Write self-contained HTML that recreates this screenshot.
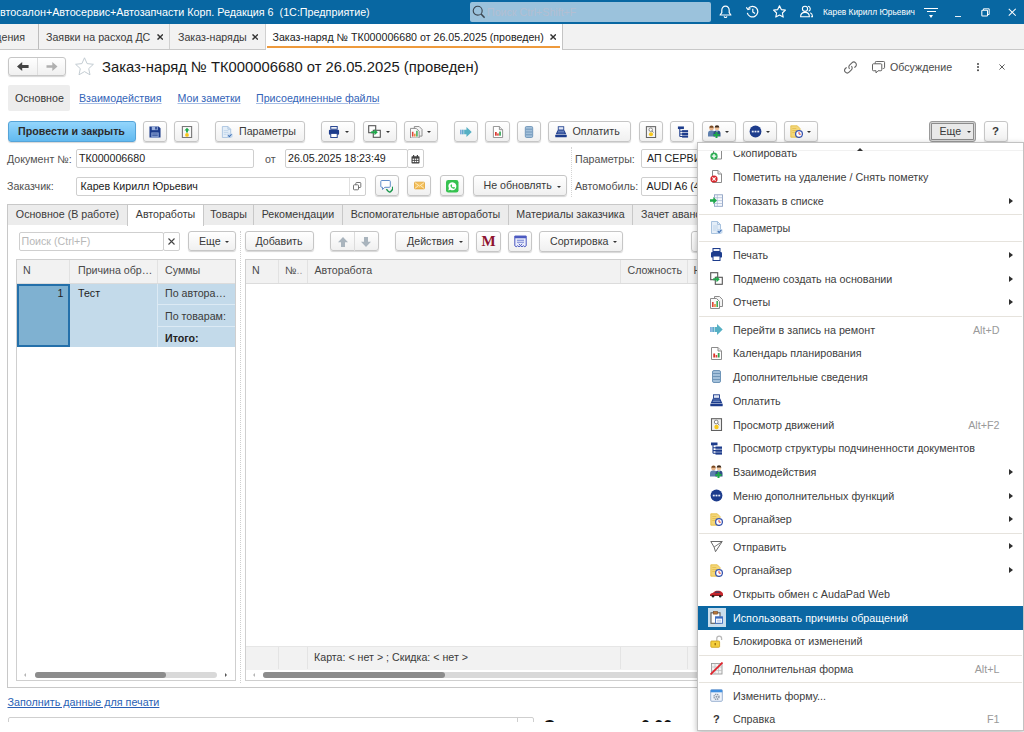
<!DOCTYPE html>
<html lang="ru"><head><meta charset="utf-8"><title>Заказ-наряд</title>
<style>
*{box-sizing:border-box;margin:0;padding:0}
html,body{width:1024px;height:732px;overflow:hidden;background:#fff}
body{font-family:"Liberation Sans",Arial,sans-serif;font-size:10.67px;color:#3a3a3a;position:relative}
.a{position:absolute;white-space:nowrap}
.t{position:absolute;white-space:nowrap;line-height:12px}
#titlebar{left:0;top:0;width:1024px;height:24px;background:#0867a2}
#titlebar .t{color:#fff}
#tabbar{left:0;top:24px;width:1024px;height:26px;background:#f2f2f2;border-bottom:1px solid #c8c8c8}
.tsep{position:absolute;top:0;width:1px;height:25px;background:#d0d0d0}
.btn{position:absolute;height:21px;border:1px solid #c6c6c6;border-radius:3px;background:linear-gradient(#fff,#f0f0f0);box-shadow:0 1px 1px rgba(0,0,0,.16);white-space:nowrap;line-height:19px;text-align:center;color:#3a3a3a}
.inp{position:absolute;height:19px;border:1px solid #cfcfcf;border-radius:2px;background:#fff;line-height:17px;padding-left:3px;color:#222;white-space:nowrap;overflow:hidden}
.lnk{color:#2a5fb5;text-decoration:underline}
.nl{color:#3364b8;text-decoration-color:#a4bce4}
.tab{position:absolute;top:204px;height:21px;border:1px solid #c8c8c8;border-left:none;border-bottom:none;background:#ececec;line-height:19.600px;text-align:center;color:#3a3a3a}
.th{position:absolute;top:0;height:23px;line-height:21.5px;padding-left:8px;border-right:1px solid #e2e2e2;color:#4a4a4a}
.mi{position:absolute;left:0;width:325px;height:24px;line-height:24px;color:#404040;font-size:10.75px}
.mi .tx{position:absolute;left:35px;top:0;line-height:12px}
.mi .sc{position:absolute;right:23.500px;top:0;color:#9a9a9a;line-height:12px}
.mi .ar{position:absolute;right:10.500px;top:8.400px;width:0;height:0;border-left:4.300px solid #2e2e2e;border-top:3.500px solid transparent;border-bottom:3.500px solid transparent}

.msep{position:absolute;left:1px;width:323px;height:1px;background:#e6e3dd}
.x{position:absolute;font-size:13px;line-height:12px;color:#333}
</style></head><body>

<div class="a" id="titlebar">
<div class="t" style="left:0;top:6px;font-size:10.760px">втосалон+Автосервис+Автозапчасти Корп. Редакция 6&nbsp; (1С:Предприятие)</div>
<div class="a" style="left:470px;top:1.500px;width:241px;height:20.500px;border-radius:2px;background:#9bc2dc"></div>
<svg class="a" style="left:471.5px;top:5px" width="13.5" height="13.5" viewBox="0 0 13 13" ><circle cx="5.500" cy="5.500" r="4.300" fill="none" stroke="#3c4650" stroke-width="1.100"/><path d="M8.700 8.700l3.500 3.500" stroke="#3c4650" stroke-width="1.500"/></svg>
<div class="t" style="left:487px;top:6px;color:#b3bfd2">Поиск Ctrl+Shift+F</div>
<svg class="a" style="left:719px;top:5px" width="13" height="13" viewBox="0 0 13 13" ><path d="M6.500 1.200c-2.300 0-3.700 1.700-3.700 4v2.500l-1.700 2.300h10.800l-1.700-2.300v-2.500c0-2.300-1.400-4-3.700-4z" stroke="#fff" fill="none" stroke-width="1.200" stroke-linejoin="round"/><path d="M5.200 11.300a1.300 1.300 0 0 0 2.600 0" stroke="#fff" fill="none" stroke-width="1.100"/></svg>
<svg class="a" style="left:746px;top:5px" width="13" height="13" viewBox="0 0 13 13" ><path d="M2.200 3.500a5.300 5.300 0 1 1-.9 4.300" stroke="#fff" fill="none" stroke-width="1.200"/><path d="M0.300 2.300l1.700 2.200 2.500-.9" stroke="#fff" fill="none" stroke-width="1.200"/><path d="M6.800 3.700v3.300l2.200 1.600" stroke="#fff" fill="none" stroke-width="1.200"/></svg>
<svg class="a" style="left:773px;top:5px" width="13" height="13" viewBox="0 0 13 13" ><path d="M6.500 0.800l1.800 3.800 4.100.5-3 2.900.8 4.100-3.700-2-3.700 2 .8-4.100-3-2.900 4.100-.5z" stroke="#fff" fill="none" stroke-width="1.150" stroke-linejoin="round"/></svg>
<svg class="a" style="left:800px;top:5px" width="13" height="13" viewBox="0 0 13 13" ><circle cx="5" cy="3.800" r="2.600" stroke="#fff" fill="none" stroke-width="1.100"/><path d="M0.600 11.800c0-2.800 1.800-4.400 4.400-4.400s4.400 1.600 4.400 4.400z" stroke="#fff" fill="none" stroke-width="1.100" stroke-linejoin="round"/><path d="M8 1.300a2.600 2.600 0 0 1 .6 5M10.300 7.800c1.400.7 2.200 2 2.200 4h-1.600" stroke="#fff" fill="none" stroke-width="1.100"/></svg>
<div class="t" style="left:823px;top:6px;font-size:9.6px;transform:scaleX(.87);transform-origin:0 0">Карев Кирилл Юрьевич</div>
<div class="a" style="left:924px;top:7.5px;width:14px;height:1.2px;background:#fff"></div>
<div class="a" style="left:926.5px;top:11px;width:9px;height:1.2px;background:#fff"></div>
<div class="a" style="left:928.5px;top:14.5px;width:0;height:0;border-top:3px solid #fff;border-left:2.5px solid transparent;border-right:2.5px solid transparent"></div>
<div class="a" style="left:955px;top:15.5px;width:6px;height:1.2px;background:#e8f0f8"></div>
<svg class="a" style="left:981px;top:8px" width="9" height="9" viewBox="0 0 11 11"><path d="M3 2.500v-1.500h7v7h-1.500" fill="none" stroke="#fff" stroke-width="1.200"/><rect x="1" y="2.800" width="7" height="7" rx="1" fill="none" stroke="#fff" stroke-width="1.300"/></svg>
<svg class="a" style="left:1007.5px;top:8px" width="8.5" height="8.5" viewBox="0 0 11 11"><path d="M1 1l9 9M10 1l-9 9" stroke="#fff" stroke-width="1.300"/></svg>
</div>
<div class="a" id="tabbar">
 <div class="t" style="right:999px;top:7px">щения</div>
 <div class="tsep" style="left:38px;background:#bdbdbd"></div>
 <div class="t" style="left:46px;top:7px">Заявки на расход ДС</div>
 <svg class="a" style="left:157.10000000000002px;top:9.799999999999997px" width="6.4" height="6" viewBox="0 0 6.4 6"><path d="M.5.4l5.400 5.200M5.900.4l-5.400 5.200" stroke="#333" stroke-width="1.400"/></svg>
 <div class="tsep" style="left:169px"></div>
 <div class="t" style="left:178px;top:7px">Заказ-наряды</div>
 <svg class="a" style="left:252.10000000000002px;top:9.799999999999997px" width="6.4" height="6" viewBox="0 0 6.4 6"><path d="M.5.4l5.400 5.200M5.900.4l-5.400 5.200" stroke="#333" stroke-width="1.400"/></svg>
 <div class="tsep" style="left:265px"></div>
 <div class="a" style="left:266px;top:0;width:296px;height:26px;background:#fff"></div><div class="a" style="left:267px;top:22.300px;width:293px;height:2px;background:#ee9a3c"></div>
 <div class="t" style="left:272.500px;top:7px;color:#222">Заказ-наряд № ТК000006680 от 26.05.2025 (проведен)</div>
 <svg class="a" style="left:549.9px;top:9.799999999999997px" width="6.4" height="6" viewBox="0 0 6.4 6"><path d="M.5.4l5.400 5.200M5.900.4l-5.400 5.200" stroke="#333" stroke-width="1.400"/></svg>
 <div class="tsep" style="left:562px;background:#c4c4c4"></div>
</div>
<div class="btn" style="left:7.500px;top:56.500px;width:58.500px;height:19px"></div>
<div class="a" style="left:36.700px;top:57.500px;width:1px;height:17px;background:#dedede"></div>
<svg class="a" style="left:16.500px;top:62px" width="12" height="9" viewBox="0 0 12 9"><path d="M0 4.500l5.200-4.500v3h6.400v3h-6.400v3z" fill="#444"/></svg>
<svg class="a" style="left:45.500px;top:62px" width="12" height="9" viewBox="0 0 12 9"><path d="M11.500 4.500l-5.200-4.500v3.200h-5.800v2.600h5.800v3.200z" fill="#b0b0b0"/></svg>
<svg class="a" style="left:75px;top:56.5px" width="19" height="19" viewBox="0 0 19 19" ><path d="M9.500 0.800l2.600 5.800 6.300.7-4.700 4.300 1.300 6.200-5.500-3.200-5.500 3.200 1.300-6.200-4.700-4.300 6.300-.7z" fill="#fff" stroke="#bcc6cd" stroke-width=".9" stroke-linejoin="round"/></svg>
<div class="t" style="left:102px;top:58px;font-size:14.8px;line-height:18px;color:#1a1a1a">Заказ-наряд № ТК000006680 от 26.05.2025 (проведен)</div>
<svg class="a" style="left:844px;top:60.5px" width="13" height="13" viewBox="0 0 13 13" ><path d="M5.600 7.800a2.600 2.600 0 0 1 0-3.700l2.300-2.300a2.600 2.600 0 0 1 3.700 3.700l-1.200 1.200" fill="none" stroke="#666" stroke-width="1.100"/><path d="M7.400 5.200a2.600 2.600 0 0 1 0 3.700l-2.300 2.300a2.600 2.600 0 0 1-3.700-3.700l1.200-1.200" fill="none" stroke="#666" stroke-width="1.100"/></svg>
<svg class="a" style="left:871.5px;top:61px" width="14" height="13" viewBox="0 0 15 14" ><path d="M3.500 2.800v-1.300a1 1 0 0 1 1-1h8a1 1 0 0 1 1 1v5.500a1 1 0 0 1-1 1h-1" fill="none" stroke="#555" stroke-width="1"/><path d="M0.500 4a1 1 0 0 1 1-1h8a1 1 0 0 1 1 1v5.500a1 1 0 0 1-1 1h-3l-2.200 2.300v-2.300h-2.800a1 1 0 0 1-1-1z" fill="#fff" stroke="#555" stroke-width="1"/></svg>
<div class="t" style="left:890px;top:60.600px;color:#4a4a4a">Обсуждение</div>
<div class="a" style="left:976.700px;top:62.600px;width:2px;height:2px;border-radius:1px;background:#444;box-shadow:0 3.100px 0 #444,0 6.200px 0 #444"></div>
<svg class="a" style="left:999px;top:64px" width="6" height="6" viewBox="0 0 7 7"><path d="M.5.5l6 6M6.500.5l-6 6" stroke="#555" stroke-width="1.100"/></svg>
<div class="a" style="left:7.5px;top:84.5px;width:62.5px;height:26px;background:#ededed;border-radius:2px"></div>
<div class="t" style="left:15px;top:92px;color:#333">Основное</div>
<div class="t lnk nl" style="left:79px;top:92px">Взаимодействия</div>
<div class="t lnk nl" style="left:177.500px;top:92px">Мои заметки</div>
<div class="t lnk nl" style="left:256px;top:92px">Присоединенные файлы</div>
<div class="btn" style="left:7.5px;top:120.5px;width:128px;height:21.500px;background:linear-gradient(#93d5fc,#62baf0);border-color:#56a4d8;font-weight:bold;color:#2c2c2c">Провести и закрыть</div>
<div class="btn" style="left:143px;top:120.5px;width:24px;height:21.500px;"></div>
<svg class="a" style="left:149px;top:125.7px" width="12" height="12" viewBox="0 0 13 13" ><path d="M0.5 0.5h10l2 2v10h-12z" fill="#1d3c8c"/><rect x="3" y="0.5" width="6.5" height="4" fill="#9fb4de"/><rect x="6.8" y="1" width="1.6" height="2.8" fill="#1d3c8c"/><rect x="2.5" y="7" width="8" height="5.5" fill="#8ea6d6"/><path d="M3.5 8.7h6M3.5 10.5h6" stroke="#1d3c8c" stroke-width=".8"/></svg>
<div class="btn" style="left:174px;top:120.5px;width:25px;height:21.500px;"></div>
<svg class="a" style="left:180.5px;top:125.7px" width="12" height="12" viewBox="0 0 13 13" ><rect x="1.5" y="0.5" width="10" height="12" fill="#f7f7f7" stroke="#777" stroke-width="1.2"/><path d="M6.5 2l2.800 3h-1.800v2h-2v-2h-1.800z" fill="#1ea84a"/><circle cx="6.5" cy="9.7" r="2" fill="#f6c416"/></svg>
<div class="btn" style="left:215px;top:120.5px;width:90px;height:21.500px;text-align:left;padding-left:23px">Параметры</div>
<svg class="a" style="left:221px;top:125.7px" width="12" height="12" viewBox="0 0 13 13" ><path d="M1.5 0.5h6l3 3v9h-9z" fill="#e4eef8" stroke="#a9c3df" stroke-width="1"/><path d="M7.5 0.5v3h3" fill="none" stroke="#a9c3df"/><path d="M3 5h5M3 7h5M3 9h3" stroke="#b9cfe6" stroke-width=".8"/><rect x="6.5" y="8" width="6" height="4.5" rx="1" fill="#c6d9ee"/><path d="M7.8 10.2l1.3 1.3 2.3-2.6" stroke="#3a6bb0" stroke-width="1.1" fill="none"/></svg>
<div class="btn" style="left:321px;top:120.5px;width:34px;height:21.500px;"></div>
<svg class="a" style="left:328px;top:125.7px" width="12" height="12" viewBox="0 0 13 13" ><rect x="3" y="0.5" width="7" height="3" fill="#eef1f8" stroke="#1d3c8c" stroke-width="1"/><rect x="1" y="4" width="11" height="5.600" rx="1.200" fill="#1d3c8c"/><rect x="3" y="8" width="7" height="4.5" fill="#fff" stroke="#1d3c8c" stroke-width="1"/></svg>
<div class="a" style="left:345px;top:130.7px;width:0;height:0;border-top:2.5px solid #333;border-left:2.5px solid transparent;border-right:2.5px solid transparent"></div>
<div class="btn" style="left:362.5px;top:120.5px;width:34px;height:21.500px;"></div>
<svg class="a" style="left:368px;top:125px" width="13" height="13" viewBox="0 0 13 13" ><rect x="0.700" y="0.700" width="7" height="7" fill="#fff" stroke="#555" stroke-width="1.100"/><rect x="5.300" y="5.300" width="7" height="7" fill="#fff" stroke="#555" stroke-width="1.100"/><path d="M3.2 6.2h3.3v-2l3.3 3-3.3 3v-2h-3.3z" fill="#1ea84a"/></svg>
<div class="a" style="left:386px;top:130.7px;width:0;height:0;border-top:2.5px solid #333;border-left:2.5px solid transparent;border-right:2.5px solid transparent"></div>
<div class="btn" style="left:404px;top:120.5px;width:33.5px;height:21.500px;"></div>
<svg class="a" style="left:410px;top:125.5px" width="12.5" height="12.5" viewBox="0 0 13 13" ><path d="M4.5 0.5h5l3 3v7h-8z" fill="#f3f3f3" stroke="#8c8c8c"/><path d="M0.5 2.5h6l3 3v7h-9z" fill="#fafafa" stroke="#8c8c8c"/><rect x="2" y="6" width="1.6" height="5" fill="#e0443a"/><rect x="4.2" y="8" width="1.6" height="3" fill="#ef8a3a"/><rect x="6.4" y="5" width="1.6" height="6" fill="#3cae5a"/></svg>
<div class="a" style="left:427px;top:130.7px;width:0;height:0;border-top:2.5px solid #333;border-left:2.5px solid transparent;border-right:2.5px solid transparent"></div>
<div class="btn" style="left:454px;top:120.5px;width:24px;height:21.500px;"></div>
<svg class="a" style="left:460px;top:125.7px" width="12" height="12" viewBox="0 0 13 13" ><rect x="0.3" y="4" width="1.3" height="5" fill="#4f8fd0"/><rect x="2.3" y="4" width="1.6" height="5" fill="#4f9fc8"/><path d="M4.5 4h2.5v-3l5.7 5.5-5.7 5.5v-3h-2.5z" fill="#56b0c4"/></svg>
<div class="btn" style="left:485px;top:120.5px;width:24.5px;height:21.500px;"></div>
<svg class="a" style="left:491.5px;top:125.7px" width="12" height="12" viewBox="0 0 13 13" ><path d="M1.5 0.5h6.5l3.5 3.5v8.500h-10z" fill="#fff" stroke="#8c8c8c"/><path d="M8 0.5v3.500h3.500" fill="#e8e8e8" stroke="#8c8c8c"/><rect x="3.300" y="6.500" width="1.800" height="4" fill="#d8322a"/><rect x="5.600" y="8" width="1.700" height="2.500" fill="#e0443a"/><rect x="7.800" y="6" width="1.800" height="4.500" fill="#2fa552"/></svg>
<div class="btn" style="left:517px;top:120.5px;width:24px;height:21.500px;"></div>
<svg class="a" style="left:523px;top:125.7px" width="12" height="12" viewBox="0 0 13 13" ><rect x="2.500" y="0.500" width="8" height="12" rx="1.500" fill="#a3c0da" stroke="#6f95b8"/><path d="M3 3.500h7M3 6.500h7M3 9.500h7" stroke="#6f95b8" stroke-width="1"/></svg>
<div class="btn" style="left:548px;top:120.5px;width:83px;height:21.500px;text-align:left;padding-left:23.500px">Оплатить</div>
<svg class="a" style="left:555px;top:125.7px" width="12" height="12" viewBox="0 0 13 13" ><rect x="3.500" y="0.800" width="6" height="3.500" fill="#dfe6f5" stroke="#1d3c8c" stroke-width=".9"/><path d="M2.800 4.500h7.400l2 4.500h-11.400z" fill="#1d3c8c"/><path d="M3.200 6h6.600M2.700 7.500h7.600" stroke="#8ea6d6" stroke-width=".7"/><rect x="0.300" y="9.500" width="12.400" height="2.800" rx=".6" fill="#1d3c8c"/></svg>
<div class="btn" style="left:638.5px;top:120.5px;width:24px;height:21.500px;"></div>
<svg class="a" style="left:645px;top:125.7px" width="12" height="12" viewBox="0 0 13 13" ><rect x="1.500" y="0.700" width="10" height="11.800" fill="#f3f3f3" stroke="#606060" stroke-width="1.100"/><circle cx="6.200" cy="4" r="1.900" fill="#fff" stroke="#777" stroke-width=".9"/><path d="M7.500 5.300l1.800 1.700" stroke="#777" stroke-width="1"/><circle cx="6.500" cy="9" r="2.200" fill="#f8c81c"/></svg>
<div class="btn" style="left:670px;top:120.5px;width:24px;height:21.500px;"></div>
<svg class="a" style="left:676.5px;top:125.7px" width="12" height="12" viewBox="0 0 13 13" ><rect x="1" y="0.500" width="6.500" height="2.800" fill="#1d3c8c"/><path d="M3 3v8.300M3 5.800h3M3 8.600h3M3 11.300h3" stroke="#1d3c8c" stroke-width="1.100" fill="none"/><rect x="5.500" y="4.500" width="6.500" height="2.300" fill="#1d3c8c"/><rect x="5.500" y="7.500" width="6.500" height="2.300" fill="#1d3c8c"/><rect x="5.500" y="10.300" width="6.500" height="2.300" fill="#1d3c8c"/></svg>
<div class="btn" style="left:701.5px;top:120.5px;width:34px;height:21.500px;"></div>
<svg class="a" style="left:707.5px;top:125px" width="14" height="13" viewBox="0 0 14 13" ><circle cx="3.500" cy="3.200" r="2.200" fill="#e7b48a"/><path d="M1.300 2.800a2.200 2.200 0 0 1 4.400 0z" fill="#7a4a22"/><path d="M0 11.500v-3a3 3 0 0 1 3-3h1a3 3 0 0 1 3 3v3z" fill="#5d7fae"/><circle cx="9" cy="3" r="2.300" fill="#efc29a"/><path d="M6.700 2.600a2.300 2.300 0 0 1 4.600 0z" fill="#3b2a1c"/><path d="M5.500 11.500v-3a3 3 0 0 1 3-3h1a3 3 0 0 1 3 3v3z" fill="#2f4f86"/><path d="M8.300 5.600l.7 2 .7-2z" fill="#fff"/><path d="M7.300 8.300h2v-2h2v2h2v2h-2v2h-2v-2h-2z" transform="translate(-1.800 .8)" fill="#1ea84a"/></svg>
<div class="a" style="left:725px;top:130.7px;width:0;height:0;border-top:2.5px solid #333;border-left:2.5px solid transparent;border-right:2.5px solid transparent"></div>
<div class="btn" style="left:742.5px;top:120.5px;width:34px;height:21.500px;"></div>
<svg class="a" style="left:748.5px;top:125px" width="13" height="13" viewBox="0 0 13 13" ><circle cx="6.500" cy="6.500" r="5.900" fill="#1d3c8c"/><rect x="2.800" y="5.700" width="1.900" height="1.700" fill="#e8edf8"/><rect x="5.550" y="5.700" width="1.900" height="1.700" fill="#e8edf8"/><rect x="8.300" y="5.700" width="1.900" height="1.700" fill="#e8edf8"/></svg>
<div class="a" style="left:766px;top:130.7px;width:0;height:0;border-top:2.5px solid #333;border-left:2.5px solid transparent;border-right:2.5px solid transparent"></div>
<div class="btn" style="left:784px;top:120.5px;width:34px;height:21.500px;"></div>
<svg class="a" style="left:789.5px;top:125px" width="13" height="13" viewBox="0 0 13 13" ><path d="M0.800 0.800h6.500l2.700 2.700v8.700h-9.200z" fill="#f3d67a" stroke="#e2b93c" stroke-width=".8"/><path d="M2.300 3.500h4M2.300 5.500h5M2.300 7.500h3" stroke="#e2b93c" stroke-width=".7"/><circle cx="9" cy="9" r="3.400" fill="#fff" stroke="#3a56b0" stroke-width="1.300"/><path d="M9 7v2.200h1.800" stroke="#d8322a" stroke-width=".9" fill="none"/></svg>
<div class="a" style="left:807px;top:130.7px;width:0;height:0;border-top:2.5px solid #333;border-left:2.5px solid transparent;border-right:2.5px solid transparent"></div>
<div class="btn" style="left:928.5px;top:120.5px;width:47.500px;background:#e9e9e9;border-color:#9a9a9a;box-shadow:inset 0 0 0 1px #d6d6d6,inset 0 0 0 2px #8c8c8c;text-align:left;padding-left:10px">Еще</div>
<div class="a" style="left:966.5px;top:130.7px;width:0;height:0;border-top:2.5px solid #333;border-left:2.5px solid transparent;border-right:2.5px solid transparent"></div>
<div class="btn" style="left:983.5px;top:120.5px;width:24px;height:21.500px;font-weight:bold;font-size:11.500px;color:#3a3a3a">?</div>
<div class="t" style="left:7px;top:152.500px;color:#505050">Документ №:</div>
<div class="inp" style="left:76px;top:149.200px;width:178px;padding-left:2px;line-height:17.500px">ТК000006680</div>
<div class="t" style="left:265px;top:152.500px;color:#505050">от</div>
<div class="inp" style="left:285px;top:149.200px;width:123px;padding-left:2px;line-height:17.500px">26.05.2025 18:23:49</div>
<div class="inp" style="left:407px;top:149.200px;width:17px"></div>
<svg class="a" style="left:411px;top:154.5px" width="9" height="9" viewBox="0 0 9 9" ><rect x="0.500" y="1.200" width="8" height="7.300" rx=".8" fill="#444"/><rect x="2" y="0" width="1.200" height="2.200" fill="#444"/><rect x="5.800" y="0" width="1.200" height="2.200" fill="#444"/><g fill="#fff"><rect x="1.600" y="3.600" width="1.500" height="1.300"/><rect x="3.750" y="3.600" width="1.500" height="1.300"/><rect x="5.900" y="3.600" width="1.500" height="1.300"/><rect x="1.600" y="5.800" width="1.500" height="1.300"/><rect x="3.750" y="5.800" width="1.500" height="1.300"/><rect x="5.900" y="5.800" width="1.500" height="1.300"/></g></svg>
<div class="t" style="left:575px;top:152.500px;color:#505050">Параметры:</div>
<div class="inp" style="left:641px;top:149.200px;width:100px;line-height:17.500px;padding-left:5px">АП СЕРВИС</div>
<div class="t" style="left:7px;top:180px;color:#505050">Заказчик:</div>
<div class="inp" style="left:76px;top:177px;width:290px;padding-left:3.500px">Карев Кирилл Юрьевич</div>
<div class="a" style="left:349px;top:177.500px;width:1px;height:17px;background:#e0e0e0"></div>
<svg class="a" style="left:353px;top:182px" width="9" height="9" viewBox="0 0 9 9" ><rect x="2.800" y="0.500" width="5" height="5" rx=".8" fill="#fff" stroke="#666" stroke-width=".9"/><rect x="0.500" y="2.800" width="5" height="5" rx=".8" fill="#fff" stroke="#666" stroke-width=".9"/></svg>
<div class="btn" style="left:374.500px;top:175px;width:24px"></div>
<svg class="a" style="left:380px;top:179.5px" width="13" height="13" viewBox="0 0 13 13" ><path d="M0.800 1.500a1 1 0 0 1 1-1h7.500a1 1 0 0 1 1 1v4.800a1 1 0 0 1-1 1h-4.500l-2.300 2.200v-2.200h-.7a1 1 0 0 1-1-1z" fill="#fff" stroke="#5f8cc8" stroke-width="1"/><path d="M5.800 9.500c1 1.600 2.300 2.700 3.700 3.200.6.200 1.200 0 1.600-.4l1.300-1.500c1.200-1.400 1.300-3 .3-4.300l-.9.500c.5 1 .3 1.900-.5 2.800l-1 1.100c-.5.400-1 .4-1.500.1l-1.800-2.300z" fill="#17964a"/></svg>
<div class="btn" style="left:407px;top:175px;width:24px"></div>
<svg class="a" style="left:413.5px;top:181px" width="11" height="9" viewBox="0 0 13 12" preserveAspectRatio="none"><rect x="0.500" y="1.500" width="12" height="9" rx=".8" fill="#f4c05a" stroke="#dc9a28" stroke-width=".9"/><path d="M0.800 2l5.700 4.800 5.700-4.800M0.800 10.200l4.300-4M12.200 10.200l-4.300-4" fill="none" stroke="#fff3d6" stroke-width="1"/></svg>
<div class="btn" style="left:440px;top:175px;width:24px"></div>
<svg class="a" style="left:446px;top:180px" width="12.5" height="12.5" viewBox="0 0 13 13" ><rect x="0" y="0" width="13" height="13" rx="2.400" fill="#35c24f"/><path d="M6.600 2.300a4.200 4.200 0 0 0-3.600 6.400l-.6 2.100 2.200-.6a4.200 4.200 0 1 0 2-7.900z" fill="#fff"/><path d="M5.200 4.600c.2-.3.500-.3.700 0l.4.800c.1.200 0 .4-.1.500l-.3.300c.3.700.9 1.200 1.600 1.600l.4-.4c.1-.1.300-.2.500-.1l.8.400c.3.200.3.500.1.700-.4.600-1 .8-1.700.6-1.400-.4-2.400-1.400-2.900-2.800-.2-.6 0-1.200.5-1.600z" fill="#35c24f"/></svg>
<div class="btn" style="left:472.500px;top:175px;width:94.500px;text-align:left;padding-left:10px;line-height:19.500px">Не обновлять</div>
<div class="a" style="left:557px;top:185.5px;width:0;height:0;border-top:2.5px solid #333;border-left:2.5px solid transparent;border-right:2.5px solid transparent"></div>
<div class="t" style="left:575px;top:180px;color:#505050">Автомобиль:</div>
<div class="inp" style="left:641px;top:177px;width:100px;padding-left:4.500px">AUDI A6 (4F)</div>
<div class="a" style="left:570.500px;top:147px;width:0;height:50px;border-left:1px dotted #d4d4d4"></div>
<div class="a" style="left:7px;top:224px;width:1017px;height:463.500px;border-left:1px solid #c8c8c8;border-top:1px solid #c8c8c8;border-bottom:1px solid #c8c8c8"></div>
<div class="tab" style="left:7px;width:121px;border-left:1px solid #c8c8c8">Основное (В работе)</div>
<div class="tab" style="left:127px;width:77px;background:#fff;top:203.500px;height:22.500px;line-height:18.500px;border-left:1px solid #c8c8c8">Автоработы</div>
<div class="tab" style="left:204px;width:50px">Товары</div>
<div class="tab" style="left:254px;width:89px">Рекомендации</div>
<div class="tab" style="left:343px;width:166px">Вспомогательные автоработы</div>
<div class="tab" style="left:509px;width:124px">Материалы заказчика</div>
<div class="tab" style="left:633px;width:120px;text-align:left;padding-left:8px">Зачет авансов</div>
<div class="inp" style="left:18.5px;top:231.5px;width:145px;height:19.5px;color:#b8b8b8;line-height:17.5px;padding-left:2px">Поиск (Ctrl+F)</div>
<div class="inp" style="left:162.5px;top:231.5px;width:17.5px;height:19.5px;padding:0"></div>
<svg class="a" style="left:167.5px;top:237.5px" width="7" height="7" viewBox="0 0 7 7"><path d="M.5.5l6 6M6.500.5l-6 6" stroke="#444" stroke-width="1.100"/></svg>
<div class="btn" style="left:187.5px;top:230.500px;width:48px;height:20.5px;text-align:left;padding-left:10.5px">Еще</div>
<div class="a" style="left:225px;top:240.5px;width:0;height:0;border-top:2.5px solid #333;border-left:2.5px solid transparent;border-right:2.5px solid transparent"></div>
<div class="a" style="left:16px;top:259px;width:220px;height:422px;border:1px solid #cfcfcf;background:#fff">
 <div class="a" style="left:0;top:0;width:218px;height:23.5px;background:#f2f2f2;border-bottom:1px solid #dcdcdc"></div>
 <div class="th" style="left:0;width:53px;padding-left:6px">N</div>
 <div class="th" style="left:53px;width:88px">Причина обр…</div>
 <div class="th" style="left:141px;width:77px;border-right:none;padding-left:7px">Суммы</div>
 <div class="a" style="left:0;top:23.5px;width:218px;height:63px;background:#c3daea"></div>
 <div class="a" style="left:0;top:23.5px;width:53px;height:63px;background:#7fb1d1;border:2px solid #2470aa"></div>
 <div class="t" style="left:40.5px;top:27.2px;color:#222">1</div>
 <div class="t" style="left:61px;top:27.2px;color:#222">Тест</div>
 <div class="a" style="left:140px;top:23.5px;width:1px;height:63px;background:#dceaf4"></div>
 <div class="a" style="left:141px;top:43.5px;width:77px;height:1px;background:#dceaf4"></div>
 <div class="a" style="left:141px;top:65.5px;width:77px;height:1px;background:#dceaf4"></div>
 <div class="t" style="left:148px;top:27.2px">По автора…</div>
 <div class="t" style="left:148px;top:49.5px">По товарам:</div>
 <div class="t" style="left:148px;top:71.5px;font-weight:bold;color:#222">Итого:</div>
</div>
<div class="a" style="left:34.5px;top:671.5px;width:182px;height:6.5px;border-radius:3.5px;background:#d9d9d9"></div>
<div class="a" style="left:34.5px;top:671.5px;width:131.5px;height:6.5px;border-radius:3.5px;background:#8c8c8c"></div>
<div class="a" style="left:23.5px;top:673px;width:0;height:0;border-right:2.5px solid #b5b5b5;border-top:2px solid transparent;border-bottom:2px solid transparent"></div>
<div class="a" style="left:225px;top:673px;width:0;height:0;border-left:2.5px solid #555;border-top:2px solid transparent;border-bottom:2px solid transparent"></div>
<div class="a" style="left:240px;top:231px;width:0;height:452px;border-left:1px dotted #cfcfcf"></div>
<div class="btn" style="left:244.500px;top:230.500px;width:69px;height:20.500px">Добавить</div>
<div class="btn" style="left:330px;top:230.500px;width:48.500px;height:20.500px"></div><div class="a" style="left:354px;top:232px;width:1px;height:18.500px;background:#dcdcdc"></div>
<svg class="a" style="left:337.5px;top:236.5px" width="10" height="10" viewBox="0 0 11 11" ><path d="M5.500 0l5.500 5.800h-3.300v5.200h-4.400v-5.200h-3.300z" fill="#a9b4bd"/></svg>
<svg class="a" style="left:361px;top:236.5px" width="10" height="10" viewBox="0 0 11 11" ><path d="M5.500 11l5.500-5.800h-3.300v-5.200h-4.400v5.200h-3.300z" fill="#a9b4bd"/></svg>
<div class="btn" style="left:395px;top:230.500px;width:73.500px;height:20.500px;text-align:left;padding-left:11px">Действия</div>
<div class="a" style="left:458.5px;top:240.5px;width:0;height:0;border-top:2.5px solid #333;border-left:2.5px solid transparent;border-right:2.5px solid transparent"></div>
<div class="btn" style="left:476px;top:230.500px;width:25px;font-family:'Liberation Serif',serif;font-weight:bold;font-size:15px;color:#8e1230">М</div>
<div class="btn" style="left:508px;top:230.500px;width:24px"></div>
<svg class="a" style="left:513.5px;top:234.5px" width="13" height="13.5" viewBox="0 0 13 13" ><path d="M0.800 0.800h11.400v9.700l-1.400 1-1.400-1-1.400 1-1.500-1-1.500 1-1.400-1-1.400 1-1.400-1z" fill="#e9ecfb" stroke="#4a58c0" stroke-width="1"/><path d="M0.800 0.800h11.400v2.200h-11.400z" fill="#4a58c0"/><path d="M3 5h7M3 7h7" stroke="#6a78d0" stroke-width=".9"/><path d="M4.800 8.500l1.700 1.800 1.700-1.800" stroke="#4a58c0" stroke-width=".9" fill="none"/></svg>
<div class="btn" style="left:539px;top:230.500px;width:84px;text-align:left;padding-left:10px">Сортировка</div>
<div class="a" style="left:613px;top:240.5px;width:0;height:0;border-top:2.5px solid #333;border-left:2.5px solid transparent;border-right:2.5px solid transparent"></div>
<div class="btn" style="left:691px;top:230.500px;width:60px"></div>
<div class="a" style="left:244.500px;top:259px;width:790px;height:422px;border:1px solid #cfcfcf;background:#fff">
 <div class="a" style="left:0;top:0;width:788px;height:23.500px;background:#f2f2f2;border-bottom:1px solid #dcdcdc"></div>
 <div class="th" style="left:0;width:33px;padding-left:6.500px">N</div>
 <div class="th" style="left:33px;width:29px;padding-left:6.500px;overflow:hidden">№<span style="color:#9a9a9a">..</span></div>
 <div class="th" style="left:62px;width:313px;padding-left:7px">Авторабота</div>
 <div class="th" style="left:375px;width:67px;padding-left:7px">Сложность</div>
 <div class="th" style="left:442px;width:80px;padding-left:6px">Н</div>
 <div class="a" style="left:0;top:386px;width:788px;height:23.500px;background:#f2f2f2;border-top:1px solid #e6e6e6"></div>
 <div class="a" style="left:32px;top:387px;width:1px;height:22px;background:#e4e4e4"></div>
 <div class="a" style="left:61px;top:387px;width:1px;height:22px;background:#e4e4e4"></div>
 <div class="a" style="left:374px;top:387px;width:1px;height:22px;background:#e4e4e4"></div>
 <div class="a" style="left:441px;top:387px;width:1px;height:22px;background:#e4e4e4"></div>
 <div class="t" style="left:68.500px;top:391.200px">Карта: &lt; нет &gt; ; Скидка: &lt; нет &gt;</div>
</div>
<div class="a" style="left:263px;top:671.500px;width:770px;height:6.500px;border-radius:3.500px;background:#d9d9d9"></div>
<div class="a" style="left:263px;top:671.500px;width:182px;height:6.500px;border-radius:3.500px;background:#8c8c8c"></div>
<div class="a" style="left:252.500px;top:673px;width:0;height:0;border-right:2.500px solid #b5b5b5;border-top:2px solid transparent;border-bottom:2px solid transparent"></div>
<div class="t lnk" style="left:7.500px;top:695.500px;font-size:10.780px">Заполнить данные для печати</div>
<div class="a" style="left:7.500px;top:716.500px;width:526px;height:30px;border:1px solid #cfcfcf;border-radius:2px"></div>
<div class="a" style="left:516.500px;top:717px;width:1px;height:20px;background:#cfcfcf"></div>
<div class="t" style="left:543.500px;top:716.500px;font-size:16px;line-height:20px;color:#111;font-weight:bold">Сумма:</div>
<div class="t" style="left:641px;top:716.500px;font-size:16px;line-height:20px;color:#111;font-weight:bold">0,00</div>
<div class="a" style="left:0;top:722px;width:1024px;height:10px;background:#fff"></div>
<div class="a" id="menu" style="left:697px;top:142px;width:327px;height:589px;background:#fff;border:1px solid #c2c2c2;box-shadow:0 2px 6px rgba(0,0,0,.28);overflow:hidden">
<div class="mi" style="top:-1.20px;height:23.73px;line-height:23.73px"><svg class="a" style="left:12px;top:4.8px" width="13" height="13" viewBox="0 0 13 13" ><path d="M3.500 0.500h8v11.500h-8z" fill="#fff" stroke="#8c8c8c" stroke-width="1"/><circle cx="4" cy="9.200" r="3.600" fill="#2fae55"/><path d="M4 7v4.400M1.800 9.200h4.400" stroke="#fff" stroke-width="1.300"/></svg><span class="tx" style="top:5.47px">Скопировать</span></div>
<div class="a" style="left:0;top:0;width:325px;height:7.500px;background:#fff;border-bottom:1px solid #f1f1f1"></div>
<div class="a" style="left:158.500px;top:4.500px;width:0;height:0;border-bottom:3px solid #333;border-left:3px solid transparent;border-right:3px solid transparent"></div>
<div class="mi" style="top:22.53px;height:23.73px;line-height:23.73px"><svg class="a" style="left:12px;top:4.8px" width="13" height="13" viewBox="0 0 13 13" ><path d="M2.500 0.500h5.500l3.500 3.500v8.500h-9z" fill="#fff" stroke="#8c8c8c" stroke-width="1"/><path d="M8 0.500v3.500h3.500" fill="#eee" stroke="#8c8c8c"/><circle cx="4" cy="9" r="3.600" fill="#d8262c"/><path d="M2.400 7.400l3.200 3.200M5.600 7.400l-3.200 3.200" stroke="#fff" stroke-width="1.200"/></svg><span class="tx" style="top:5.74px">Пометить на удаление / Снять пометку</span></div>
<div class="mi" style="top:46.26px;height:23.73px;line-height:23.73px"><svg class="a" style="left:12px;top:4.8px" width="13" height="13" viewBox="0 0 13 13" ><rect x="4.500" y="0.800" width="8" height="11.500" fill="#f6f8fc" stroke="#8fa3c4" stroke-width=".9"/><path d="M4.500 3.700h8M4.500 6.600h8M4.500 9.500h8M7.300 .8v11.500" stroke="#a9b9d4" stroke-width=".7"/><path d="M0 5.200h3.300v-2.200l3.700 3.500-3.700 3.500v-2.200h-3.300z" fill="#1ea84a"/></svg><span class="tx" style="top:6.01px">Показать в списке</span><span class="ar"></span></div>
<div class="msep" style="top:71.19px"></div>
<div class="mi" style="top:73.39px;height:23.73px;line-height:23.73px"><svg class="a" style="left:12px;top:4.8px" width="13" height="13" viewBox="0 0 13 13" ><path d="M1.5 0.5h6l3 3v9h-9z" fill="#e4eef8" stroke="#a9c3df" stroke-width="1"/><path d="M7.5 0.5v3h3" fill="none" stroke="#a9c3df"/><path d="M3 5h5M3 7h5M3 9h3" stroke="#b9cfe6" stroke-width=".8"/><rect x="6.5" y="8" width="6" height="4.5" rx="1" fill="#c6d9ee"/><path d="M7.8 10.2l1.3 1.3 2.3-2.6" stroke="#3a6bb0" stroke-width="1.1" fill="none"/></svg><span class="tx" style="top:5.88px">Параметры</span></div>
<div class="msep" style="top:98.32px"></div>
<div class="mi" style="top:100.52px;height:23.73px;line-height:23.73px"><svg class="a" style="left:12px;top:4.8px" width="13" height="13" viewBox="0 0 13 13" ><rect x="3" y="0.5" width="7" height="3" fill="#eef1f8" stroke="#1d3c8c" stroke-width="1"/><rect x="1" y="4" width="11" height="5.600" rx="1.200" fill="#1d3c8c"/><rect x="3" y="8" width="7" height="4.5" fill="#fff" stroke="#1d3c8c" stroke-width="1"/></svg><span class="tx" style="top:5.75px">Печать</span><span class="ar"></span></div>
<div class="mi" style="top:124.25px;height:23.73px;line-height:23.73px"><svg class="a" style="left:12px;top:4.8px" width="13" height="13" viewBox="0 0 13 13" ><rect x="0.700" y="0.700" width="7" height="7" fill="#fff" stroke="#555" stroke-width="1.100"/><rect x="5.300" y="5.300" width="7" height="7" fill="#fff" stroke="#555" stroke-width="1.100"/><path d="M3.2 6.2h3.3v-2l3.3 3-3.3 3v-2h-3.3z" fill="#1ea84a"/></svg><span class="tx" style="top:6.02px">Подменю создать на основании</span><span class="ar"></span></div>
<div class="mi" style="top:147.98px;height:23.73px;line-height:23.73px"><svg class="a" style="left:12px;top:4.8px" width="13" height="13" viewBox="0 0 13 13" ><path d="M4.5 0.5h5l3 3v7h-8z" fill="#f3f3f3" stroke="#8c8c8c"/><path d="M0.5 2.5h6l3 3v7h-9z" fill="#fafafa" stroke="#8c8c8c"/><rect x="2" y="6" width="1.6" height="5" fill="#e0443a"/><rect x="4.2" y="8" width="1.6" height="3" fill="#ef8a3a"/><rect x="6.4" y="5" width="1.6" height="6" fill="#3cae5a"/></svg><span class="tx" style="top:5.29px">Отчеты</span><span class="ar"></span></div>
<div class="msep" style="top:172.91px"></div>
<div class="mi" style="top:175.11px;height:23.73px;line-height:23.73px"><svg class="a" style="left:12px;top:4.8px" width="13" height="13" viewBox="0 0 13 13" ><rect x="0.3" y="4" width="1.3" height="5" fill="#4f8fd0"/><rect x="2.3" y="4" width="1.6" height="5" fill="#4f9fc8"/><path d="M4.5 4h2.5v-3l5.7 5.5-5.7 5.5v-3h-2.5z" fill="#56b0c4"/></svg><span class="tx" style="top:6.16px">Перейти в запись на ремонт</span><span class="sc" style="top:6.16px">Alt+D</span></div>
<div class="mi" style="top:198.84px;height:23.73px;line-height:23.73px"><svg class="a" style="left:12px;top:4.8px" width="13" height="13" viewBox="0 0 13 13" ><path d="M1.5 0.5h6.5l3.5 3.5v8.500h-10z" fill="#fff" stroke="#8c8c8c"/><path d="M8 0.5v3.500h3.500" fill="#e8e8e8" stroke="#8c8c8c"/><rect x="3.300" y="6.500" width="1.800" height="4" fill="#d8322a"/><rect x="5.600" y="8" width="1.700" height="2.500" fill="#e0443a"/><rect x="7.800" y="6" width="1.800" height="4.500" fill="#2fa552"/></svg><span class="tx" style="top:5.43px">Календарь планирования</span></div>
<div class="mi" style="top:222.57px;height:23.73px;line-height:23.73px"><svg class="a" style="left:12px;top:4.8px" width="13" height="13" viewBox="0 0 13 13" ><rect x="2.500" y="0.500" width="8" height="12" rx="1.500" fill="#a3c0da" stroke="#6f95b8"/><path d="M3 3.500h7M3 6.500h7M3 9.500h7" stroke="#6f95b8" stroke-width="1"/></svg><span class="tx" style="top:5.69px">Дополнительные сведения</span></div>
<div class="mi" style="top:246.31px;height:23.73px;line-height:23.73px"><svg class="a" style="left:12px;top:4.8px" width="13" height="13" viewBox="0 0 13 13" ><rect x="3.500" y="0.800" width="6" height="3.500" fill="#dfe6f5" stroke="#1d3c8c" stroke-width=".9"/><path d="M2.800 4.500h7.400l2 4.500h-11.400z" fill="#1d3c8c"/><path d="M3.200 6h6.600M2.700 7.500h7.600" stroke="#8ea6d6" stroke-width=".7"/><rect x="0.300" y="9.500" width="12.400" height="2.800" rx=".6" fill="#1d3c8c"/></svg><span class="tx" style="top:5.96px">Оплатить</span></div>
<div class="mi" style="top:270.04px;height:23.73px;line-height:23.73px"><svg class="a" style="left:12px;top:4.8px" width="13" height="13" viewBox="0 0 13 13" ><rect x="1.500" y="0.700" width="10" height="11.800" fill="#f3f3f3" stroke="#606060" stroke-width="1.100"/><circle cx="6.200" cy="4" r="1.900" fill="#fff" stroke="#777" stroke-width=".9"/><path d="M7.500 5.300l1.800 1.700" stroke="#777" stroke-width="1"/><circle cx="6.500" cy="9" r="2.200" fill="#f8c81c"/></svg><span class="tx" style="top:6.23px">Просмотр движений</span><span class="sc" style="top:6.23px">Alt+F2</span></div>
<div class="mi" style="top:293.77px;height:23.73px;line-height:23.73px"><svg class="a" style="left:12px;top:4.8px" width="13" height="13" viewBox="0 0 13 13" ><rect x="1" y="0.500" width="6.500" height="2.800" fill="#1d3c8c"/><path d="M3 3v8.300M3 5.800h3M3 8.600h3M3 11.300h3" stroke="#1d3c8c" stroke-width="1.100" fill="none"/><rect x="5.500" y="4.500" width="6.500" height="2.300" fill="#1d3c8c"/><rect x="5.500" y="7.500" width="6.500" height="2.300" fill="#1d3c8c"/><rect x="5.500" y="10.300" width="6.500" height="2.300" fill="#1d3c8c"/></svg><span class="tx" style="top:5.50px">Просмотр структуры подчиненности документов</span></div>
<div class="mi" style="top:317.50px;height:23.73px;line-height:23.73px"><svg class="a" style="left:12px;top:4.8px" width="13" height="13" viewBox="0 0 13 13" ><circle cx="3.500" cy="3.200" r="2.200" fill="#e7b48a"/><path d="M1.300 2.800a2.200 2.200 0 0 1 4.400 0z" fill="#7a4a22"/><path d="M0 11.500v-3a3 3 0 0 1 3-3h1a3 3 0 0 1 3 3v3z" fill="#5d7fae"/><circle cx="9" cy="3" r="2.300" fill="#efc29a"/><path d="M6.700 2.600a2.300 2.300 0 0 1 4.600 0z" fill="#3b2a1c"/><path d="M5.500 11.500v-3a3 3 0 0 1 3-3h1a3 3 0 0 1 3 3v3z" fill="#2f4f86"/><path d="M8.300 5.600l.7 2 .7-2z" fill="#fff"/><path d="M7.300 8.300h2v-2h2v2h2v2h-2v2h-2v-2h-2z" transform="translate(-1.800 .8)" fill="#1ea84a"/></svg><span class="tx" style="top:5.77px">Взаимодействия</span><span class="ar"></span></div>
<div class="mi" style="top:341.23px;height:23.73px;line-height:23.73px"><svg class="a" style="left:12px;top:4.8px" width="13" height="13" viewBox="0 0 13 13" ><circle cx="6.500" cy="6.500" r="5.900" fill="#1d3c8c"/><rect x="2.800" y="5.700" width="1.900" height="1.700" fill="#e8edf8"/><rect x="5.550" y="5.700" width="1.900" height="1.700" fill="#e8edf8"/><rect x="8.300" y="5.700" width="1.900" height="1.700" fill="#e8edf8"/></svg><span class="tx" style="top:6.04px">Меню дополнительных функций</span><span class="ar"></span></div>
<div class="mi" style="top:364.96px;height:23.73px;line-height:23.73px"><svg class="a" style="left:12px;top:4.8px" width="13" height="13" viewBox="0 0 13 13" ><path d="M0.800 0.800h6.500l2.700 2.700v8.700h-9.200z" fill="#f3d67a" stroke="#e2b93c" stroke-width=".8"/><path d="M2.300 3.500h4M2.300 5.500h5M2.300 7.500h3" stroke="#e2b93c" stroke-width=".7"/><circle cx="9" cy="9" r="3.400" fill="#fff" stroke="#3a56b0" stroke-width="1.300"/><path d="M9 7v2.200h1.800" stroke="#d8322a" stroke-width=".9" fill="none"/></svg><span class="tx" style="top:5.31px">Органайзер</span><span class="ar"></span></div>
<div class="msep" style="top:389.89px"></div>
<div class="mi" style="top:392.09px;height:23.73px;line-height:23.73px"><svg class="a" style="left:12px;top:4.8px" width="13" height="13" viewBox="0 0 13 13" ><path d="M0.800 1.500h11.400l-6.700 10.200-1.400-4.600z" fill="#fff" stroke="#6a6a6a" stroke-width="1" stroke-linejoin="round"/><path d="M4.100 7.100l8.100-5.600" stroke="#6a6a6a" stroke-width=".9"/></svg><span class="tx" style="top:6.18px">Отправить</span><span class="ar"></span></div>
<div class="mi" style="top:415.82px;height:23.73px;line-height:23.73px"><svg class="a" style="left:12px;top:4.8px" width="13" height="13" viewBox="0 0 13 13" ><path d="M0.800 0.800h6.500l2.700 2.700v8.700h-9.200z" fill="#f3d67a" stroke="#e2b93c" stroke-width=".8"/><path d="M2.300 3.500h4M2.300 5.500h5M2.300 7.500h3" stroke="#e2b93c" stroke-width=".7"/><circle cx="9" cy="9" r="3.400" fill="#fff" stroke="#3a56b0" stroke-width="1.300"/><path d="M9 7v2.200h1.800" stroke="#d8322a" stroke-width=".9" fill="none"/></svg><span class="tx" style="top:5.45px">Органайзер</span><span class="ar"></span></div>
<div class="mi" style="top:439.55px;height:23.73px;line-height:23.73px"><svg class="a" style="left:12px;top:4.8px" width="13" height="13" viewBox="0 0 13 13" ><path d="M0 8c0-1.300 1-1.900 2.600-2.100l2-1.500c.6-.4 1.100-.6 1.900-.6h2.500c.9 0 1.500.2 2.100.7l1.700 1.600c.2.700.2 1.300.2 1.900 0 .6-.3.900-.8.900h-11.400c-.5 0-.8-.3-.8-.9z" fill="#c8262c"/><path d="M4.300 5.800l1.500-1.200h3.400l1.500 1.200z" fill="#2c3f66"/><path d="M0 8.200l6.500-.5 6.500.5v.9h-13z" fill="#8a1a1e"/><circle cx="3" cy="9.200" r="1.200" fill="#222"/><circle cx="10.200" cy="9.200" r="1.200" fill="#222"/></svg><span class="tx" style="top:5.72px">Открыть обмен с AudaPad Web</span></div>
<div class="mi" style="top:463.28px;height:23.73px;line-height:23.73px;background:#0b67a3;color:#fff"><div class="a" style="left:10px;top:2px;width:18px;height:19px;background:#c9ddec"></div><svg class="a" style="left:12px;top:4.8px" width="13" height="13" viewBox="0 0 13 13" ><rect x="1" y="1.800" width="9" height="10.500" fill="#fdfdfd" stroke="#5a5a5a" stroke-width="1.100"/><rect x="3.500" y="0.500" width="4" height="2.600" fill="#b9773a" stroke="#7a4a22" stroke-width=".6"/><rect x="5.500" y="5.800" width="7" height="6.500" fill="#fff" stroke="#3a6bc0" stroke-width=".9"/><rect x="5.500" y="5.800" width="7" height="1.800" fill="#3a6bc0"/><path d="M6.800 9.300h4.400M6.800 10.900h4.400" stroke="#9db9e6" stroke-width=".8"/></svg><span class="tx" style="top:5.99px">Использовать причины обращений</span></div>
<div class="mi" style="top:487.01px;height:23.73px;line-height:23.73px"><svg class="a" style="left:12px;top:4.8px" width="13" height="13" viewBox="0 0 13 13" ><path d="M6.800 6v-2.500a2.400 2.400 0 0 1 4.800 0v1.500" fill="none" stroke="#b9b9b9" stroke-width="1.300"/><rect x="0.800" y="6" width="8.800" height="6.300" rx=".8" fill="#f4cf3c" stroke="#c99a14" stroke-width=".8"/><rect x="4.500" y="8" width="1.500" height="2.300" fill="#a87a10"/></svg><span class="tx" style="top:5.26px">Блокировка от изменений</span></div>
<div class="msep" style="top:511.94px"></div>
<div class="mi" style="top:514.14px;height:23.73px;line-height:23.73px"><svg class="a" style="left:12px;top:4.8px" width="13" height="13" viewBox="0 0 13 13" ><rect x="1.500" y="1.500" width="10.500" height="10.500" fill="#f2f2f2" stroke="#9a9a9a" stroke-width=".9"/><path d="M1.500 5h10.500M1.500 8.500h10.500M5 1.500v10.500M8.500 1.500v10.500" stroke="#bdbdbd" stroke-width=".7"/><path d="M0.500 12.500l12-12" stroke="#e0202a" stroke-width="1.700"/></svg><span class="tx" style="top:6.13px">Дополнительная форма</span><span class="sc" style="top:6.13px">Alt+L</span></div>
<div class="msep" style="top:539.07px"></div>
<div class="mi" style="top:541.27px;height:23.73px;line-height:23.73px"><svg class="a" style="left:12px;top:4.8px" width="13" height="13" viewBox="0 0 13 13" ><rect x="0.700" y="0.700" width="11.600" height="11.600" rx="1" fill="#eef3fa" stroke="#8fa9cc" stroke-width=".9"/><rect x="0.700" y="0.700" width="11.600" height="2.600" fill="#3f8fe0"/><circle cx="6.500" cy="7.800" r="2.500" fill="none" stroke="#8a97a8" stroke-width="1.400" stroke-dasharray="1.300 .7"/><circle cx="6.500" cy="7.800" r="1" fill="#8a97a8"/></svg><span class="tx" style="top:6.00px">Изменить форму...</span></div>
<div class="mi" style="top:565.00px;height:23.73px;line-height:23.73px"><span class="a" style="left:15px;top:0;font-weight:bold;font-size:11px;color:#333">?</span><span class="tx" style="top:5.27px">Справка</span><span class="sc" style="top:5.27px">F1</span></div>
</div>

</body></html>
